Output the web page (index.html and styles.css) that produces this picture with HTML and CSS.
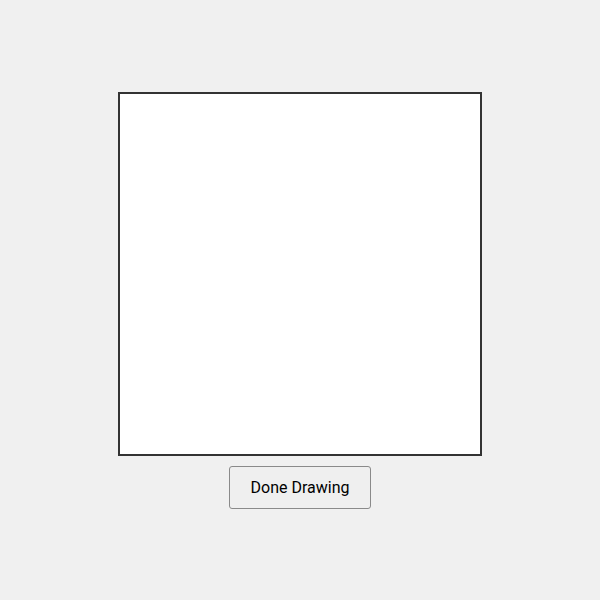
FILE: index.html
```html
<!DOCTYPE html>
<html>
<head>
<meta charset="utf-8">
<link rel="stylesheet" href="styles.css">
</head>
<body>
<div class="wrap">
  <div class="canvas"></div>
  <button class="done">Done Drawing</button>
</div>
</body>
</html>
```
FILE: styles.css
```css
html, body {
  margin: 0;
  padding: 0;
  height: 100%;
  background: #f0f0f0;
  font-family: Roboto, "Liberation Sans", sans-serif;
}
.wrap {
  height: 600px;
  display: flex;
  flex-direction: column;
  align-items: center;
  justify-content: center;
  gap: 10px;
  padding-top: 1px;
  box-sizing: border-box;
}
.canvas {
  width: 360px;
  height: 360px;
  background: #fff;
  border: 2px solid #333;
}
.done {
  width: 142px;
  height: 43px;
  background: #efefef;
  border: 1px solid #8a8a8a;
  border-radius: 3px;
  font-family: Roboto, "Liberation Sans", sans-serif;
  font-size: 16px;
  color: #000;
  padding: 0;
}
```
